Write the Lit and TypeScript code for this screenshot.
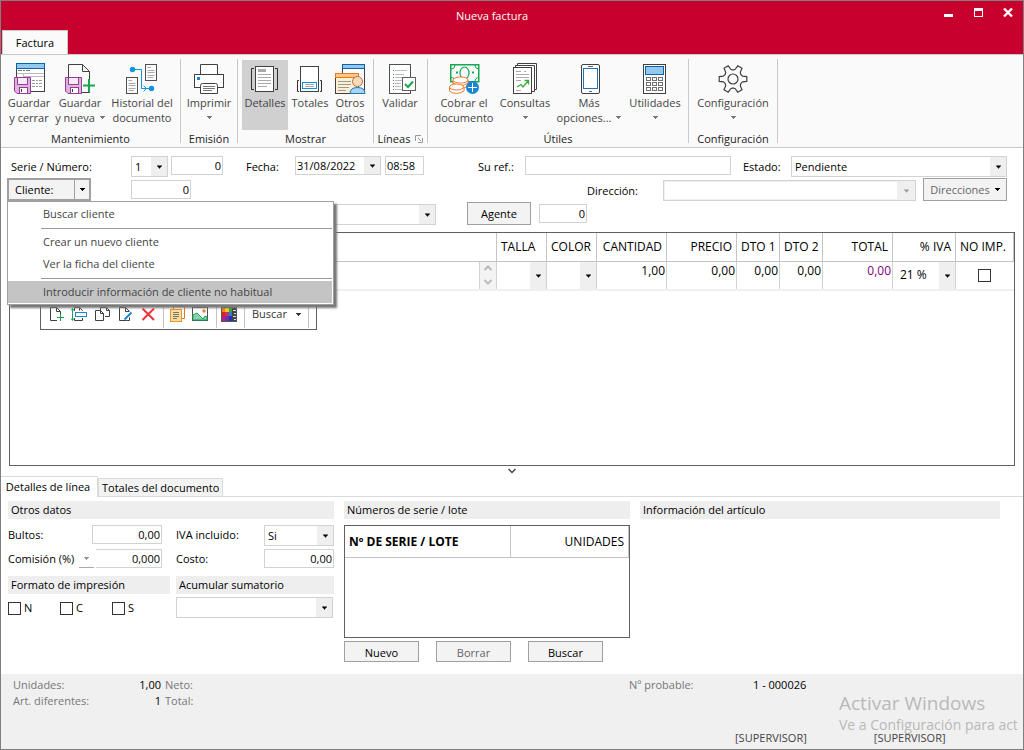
import { LitElement, html, css, svg, nothing } from "lit";
import { customElement, property } from "lit/decorators.js";
import { classMap } from "lit/directives/class-map.js";

const floppy = svg`
  <path d="M1.5 15.5H17.5V31.5H4L1.5 29Z" fill="#ddb3dd" stroke="#963b96"/>
  <rect x="5" y="16" width="9" height="6" fill="#f6eaf6"/>
  <path d="M4.500 16V22.500H14.500V16" fill="none" stroke="#963b96"/>
  <rect x="6.500" y="25.500" width="8" height="6" fill="#fafafa" stroke="#963b96"/>
  <rect x="8" y="27" width="1" height="3" fill="#404040"/>`;

const gearPath = (() => {
  const pts: string[] = [];
  for (let k = 0; k < 6; k++) {
    for (const [off, r] of [[-30, 9], [-17, 10], [-10, 14], [10, 14], [17, 10]]) {
      const a = ((k * 60 + off) * Math.PI) / 180;
      pts.push(`${(16 + r * Math.cos(a)).toFixed(1)} ${(17 + r * Math.sin(a)).toFixed(1)}`);
    }
  }
  return `M${pts.join("L")}Z`;
})();

const icons: Record<string, unknown> = {
  saveClose: svg`
    <rect x="3.5" y="1.5" width="28" height="28" fill="#fff" stroke="#404040"/>
    <rect x="3.5" y="1.500" width="28" height="5" fill="#91c8ec" stroke="#0a64ad"/>
    <path d="M5 8.500H9M10 8.500H12M13 8.500H17" stroke="#777"/>
    <path d="M4 11.500H31M10.500 11V15M10 14.500H31" stroke="#bbb"/>
    <path d="M19 18.500H22M23 18.500H25M26 18.500H29M19 21.500H22M23 21.500H25M26 21.500H29M19 24.500H22M23 24.500H25M26 24.500H29" stroke="#999"/>
    ${floppy}`,
  saveNew: svg`
    <path d="M4.500 15V2.500H18.500L25.500 9.500V17M25.500 29V30.500H18" fill="none" stroke="#404040"/>
    <path d="M18.500 2.500V9.500H25.500" fill="none" stroke="#404040"/>
    ${floppy}
    <path d="M25 17V30M19 23.500H31" stroke="#13a850" stroke-width="2"/>`,
  history: svg`
    <rect x="0.500" y="15.500" width="11" height="16" fill="#fafafa" stroke="#505050"/>
    <rect x="19.500" y="2.500" width="11" height="16" fill="#fafafa" stroke="#505050"/>
    <path d="M2.500 18.500H6M2.500 21.500H9.500M2.500 23.500H9.500M2.500 26.500H9.500M2.500 28.500H8M21.500 5.500H25M21.500 8.500H28.500M21.500 10.500H28.500M21.500 13.500H28.500M21.500 15.500H27" stroke="#aaa"/>
    <path d="M6 7.500H15.500V26.500H25M17.500 23.500L20.500 26.500L17.500 29.500" fill="none" stroke="#0d96e0"/>
    <circle cx="6.500" cy="7.500" r="2.700" fill="#0d96e0"/><circle cx="25.500" cy="26.500" r="2.700" fill="#0d96e0"/>`,
  print: svg`
    <path d="M7.500 12.500V2.500H24.500V12.500" fill="#fff" stroke="#404040"/>
    <rect x="1.500" y="12.500" width="29" height="13" fill="#fff" stroke="#404040"/>
    <rect x="4" y="15" width="3" height="3" fill="#1a86cf"/>
    <path d="M7.500 31.500V23.500Q7.500 21.500 9.500 21.500H22.500Q24.500 21.500 24.500 23.500V31.500Z" fill="#fff" stroke="#404040"/>
    <path d="M10 24.500H22M10 26.500H22M10 28.500H19" stroke="#777"/>`,
  details: svg`
    <rect x="6.500" y="4.500" width="18" height="25" fill="#fff" stroke="#404040"/>
    <rect x="9" y="7" width="8" height="3" fill="#aaa"/>
    <path d="M9 12.500H22M9 15.500H22M9 18.500H22M9 21.500H22M9 24.500H18" stroke="#aaa"/>
    <path d="M5 6.500H2.500V27.500H5M26 6.500H28.500V27.500H26" fill="none" stroke="#303030"/>`,
  totals: svg`
    <rect x="6.500" y="4.500" width="18" height="25" fill="#fff" stroke="#404040"/>
    <rect x="8.500" y="20.500" width="14" height="6" fill="#fff" stroke="#0d96e0"/>
    <path d="M11 22.500H20M11 24.500H20" stroke="#aaa"/>
    <path d="M5 18.500H3.500V29.500H5M26 18.500H27.500V29.500H26" fill="none" stroke="#303030"/>`,
  other: svg`
    <rect x="8.500" y="2.500" width="22" height="27" fill="#fff" stroke="#404040"/>
    <rect x="8.500" y="2.500" width="22" height="4" fill="#91c8ec" stroke="#0a64ad"/>
    <rect x="1.500" y="11.500" width="23" height="20" fill="#fdf0d2" stroke="#404040"/>
    <rect x="1.500" y="11.500" width="23" height="4" fill="#fbc98b" stroke="#e87722"/>
    <path d="M4 19.500H17M4 22.500H17M4 25.500H15M4 28.500H12" stroke="#999"/>
    <path d="M16 31.500Q16 25.500 23.500 25.500Q31 25.500 31 31.500Z" fill="#a9d3ef" stroke="#1a78bd"/>
    <circle cx="23.500" cy="19.500" r="5" fill="#fcd9b8" stroke="#b0703a"/>`,
  validate: svg`
    <rect x="5.500" y="2.500" width="21" height="29" fill="#fff" stroke="#505050"/>
    <path d="M11 8.500H23M11 12.500H20M11 15.500H22M11 18.500H18M11 21.500H17M11 24.500H17M11 27.500H18" stroke="#bbb"/>
    <path d="M9 8.500H10M9 15.500H10M9 21.500H10M9 27.500H10" stroke="#13a850"/><path d="M9 12.500H10M9 18.500H10M9 24.500H10" stroke="#d33"/>
    <rect x="18.500" y="15.500" width="13" height="13" fill="#fff" stroke="#606060"/>
    <path d="M21 22L24 25L29 19.500" fill="none" stroke="#13a850" stroke-width="2"/>`,
  cash: svg`
    <rect x="2.750" y="2.750" width="28" height="17" fill="#fafafa" stroke="#13a850" stroke-width="1.500"/>
    <path d="M3 7Q7 7 7 3M31 7Q27 7 27 3M3 15.500Q7 15.500 7 20M31 15.500Q27 15.500 27 20" fill="none" stroke="#13a850"/>
    <ellipse cx="16.500" cy="11" rx="4.500" ry="6" fill="none" stroke="#13a850" stroke-width="1.200"/>
    <path d="M8 10.500H10M24 10.500H26" stroke="#13a850" stroke-width="2"/>
    <g fill="#fff" stroke="#f07a30">
      <path d="M5 18V24Q12.500 29 20 24V18"/><ellipse cx="12.500" cy="18" rx="7.500" ry="3"/>
      <path d="M5 21Q12.500 26 20 21" fill="none"/>
      <path d="M1.500 25V29Q8 34 16 29V25"/><ellipse cx="8.500" cy="25" rx="7" ry="3"/>
    </g>
    <circle cx="24.500" cy="25.500" r="6.500" fill="#1a86cf"/><path d="M24.500 21V30M20 25.500H29" stroke="#fff"/>`,
  queries: svg`
    <path d="M8.500 5V1.500H27.500V27.500H25" fill="#fff" stroke="#404040"/>
    <path d="M6.500 6V3.500H25.500V29.500H23" fill="#fff" stroke="#404040"/>
    <rect x="4.500" y="5.500" width="18" height="26" fill="#fff" stroke="#404040"/>
    <path d="M7 9.500H12M15 9.500H17M7 12.500H20M7 15.500H20M7 18.500H12M7 28.500H12" stroke="#aaa"/>
    <path d="M8 25L12 22.500L14 25L19 19M15.500 18.500H19.500V22.500" fill="none" stroke="#3aa935" stroke-width="1.300"/>`,
  phone: svg`
    <rect x="8.500" y="2.500" width="18" height="29" rx="1.500" fill="#fff" stroke="#404040"/>
    <rect x="10.500" y="6.500" width="14" height="20" fill="#fff" stroke="#1a78bd"/>
    <path d="M15 4.500H20M16 29.500H19" stroke="#666"/>`,
  calc: svg`
    <rect x="4.500" y="2.500" width="22" height="29" fill="#fff" stroke="#404040"/>
    <rect x="6.500" y="4.500" width="18" height="8" fill="#91c8ec" stroke="#0a64ad"/>
    ${[15.5, 20.5, 25.5].map((y) => [7.5, 13.5, 19.5].map((x) => svg`<rect x=${x} y=${y} width="4" height="3" fill="#fff" stroke="#707070"/>`))}`,
  gear: svg`<path d=${gearPath} fill="none" stroke="#404040" stroke-width="1.200"/><circle cx="16" cy="17" r="5" fill="none" stroke="#404040" stroke-width="1.200"/>`,
};

const page = svg`<path d="M2.500 1.500H8.500L12.500 5.500V14.500H2.500ZM8.500 1.500V5.500H12.500" fill="#fff" stroke="#404040"/>`;
const small: Record<string, unknown> = {
  add: svg`${page}<rect x="9" y="8" width="8" height="8" fill="#fff"/><path d="M12.500 8V15M9 11.500H16" stroke="#13a850"/>`,
  insert: svg`<path d="M3.500 5V1.500H8.500L11.500 4.500V5M3.500 12V14.500H11.500V12M8.500 1.500V4.500" fill="none" stroke="#404040"/><rect x="4.500" y="6.500" width="11" height="4" fill="#fff" stroke="#1a86cf"/><path d="M1.500 3V14M0 4.500L1.500 2.500L3 4.500M0 12.500L1.500 14.500L3 12.500" fill="none" stroke="#13a850"/>`,
  copy: svg`<path d="M6.500 1.500H12.500L15.500 4.500V10.500H11M6.500 4V1.500M12.500 1.500V4.500H15.500" fill="none" stroke="#404040"/><path d="M1.500 4.500H6.500L9.500 7.500V14.500H1.500ZM6.500 4.500V7.500H9.500" fill="#fff" stroke="#404040"/>`,
  edit: svg`${page}<path d="M8 13L14.500 6.500" stroke="#fff" stroke-width="4"/><path d="M7.500 13.500L14.500 6.500" stroke="#1a86cf" stroke-width="2"/>`,
  remove: svg`<path d="M2.500 2.500L14 14M14 2.500L2.500 14" stroke="#ee3338" stroke-width="2"/>`,
  note: svg`<path d="M4.500 3V0.500H15.500V12.500H13" fill="#fff" stroke="#e87722"/><rect x="1.500" y="3.500" width="11" height="12" fill="#fbdc9a" stroke="#e8953a"/><path d="M4 6.500H10M4 8.500H10M4 10.500H10M4 12.500H8" stroke="#776"/>`,
  image: svg`<rect x="0.500" y="1.500" width="15" height="13" fill="#fff" stroke="#505050"/><circle cx="12" cy="5" r="1.700" fill="#f08030"/><path d="M1 9L5 7L11 13L13 10L15 11V14H1Z" fill="#8fd0b0" stroke="#13a850"/>`,
  palette: svg`<rect x="0.500" y="1.500" width="15" height="14" fill="#444" stroke="#555"/>
    <rect x="1" y="2" width="3" height="4" fill="#f08020"/><rect x="4" y="2" width="4" height="4" fill="#f0d020"/><rect x="8" y="2" width="3" height="4" fill="#40a040"/>
    <rect x="1" y="6" width="3" height="4" fill="#e02020"/><rect x="4" y="6" width="4" height="4" fill="#d03060"/><rect x="8" y="6" width="3" height="4" fill="#2080d0"/>
    <rect x="1" y="10" width="3" height="5" fill="#b02080"/><rect x="4" y="10" width="4" height="5" fill="#7030a0"/><rect x="8" y="10" width="3" height="5" fill="#2030c0"/>
    <path d="M12 4.500H15M13 7.500H15M12 10.500H15M13 13.500H15" stroke="#ddd"/>`,
};

const caret = html`<svg class="caret" width="5" height="3" viewBox="0 0 5 3" aria-hidden="true"><path d="M0 0H5V1H4V2H3V3H2V2H1V1H0Z" fill="currentColor" shape-rendering="crispEdges"/></svg>`;

@customElement("ribbon-button")
class RibbonButton extends LitElement {
  @property() icon = "";
  @property() label = "";
  @property() second = "";
  @property({ type: Boolean }) menu = false;
  @property({ type: Boolean }) active = false;

  static styles = css`
    :host { display: block; flex: none; }
    .btn {
      display: flex; flex-direction: column; align-items: center;
      width: 100%; height: 70px; padding: 2px 0 0; margin: 0; border: 0;
      background: transparent; color: #444;
      font: 11px/15px "Open Sans", "Noto Sans", sans-serif; white-space: nowrap;
    }
    .on { background: #d0d0d0; }
    .icon { display: block; flex: none; margin-bottom: 1px; }
    .line { display: flex; align-items: center; gap: 5px; height: 15px; }
    .caret { color: #777; }
  `;

  render() {
    return html`<button type="button" class=${classMap({ btn: true, on: this.active })}>
      <svg class="icon" width="32" height="32" viewBox="0 0 32 32" aria-hidden="true">${icons[this.icon]}</svg>
      <span class="line">${this.label}</span>
      <span class="line">${this.second}${this.menu ? caret : nothing}</span>
    </button>`;
  }
}

interface Btn { w: number; icon: string; label: string; second?: string; menu?: boolean; active?: boolean; }
interface Group { w: number; pad: number; title: string; launcher?: boolean; buttons: Btn[]; }

const groups: Group[] = [
  { w: 180, pad: 3, title: "Mantenimiento", buttons: [
    { w: 50, icon: "saveClose", label: "Guardar", second: "y cerrar" },
    { w: 52, icon: "saveNew", label: "Guardar", second: "y nueva", menu: true },
    { w: 72, icon: "history", label: "Historial del", second: "documento" } ] },
  { w: 57, pad: 3, title: "Emisión", buttons: [{ w: 50, icon: "print", label: "Imprimir", menu: true }] },
  { w: 136, pad: 4, title: "Mostrar", buttons: [
    { w: 46, icon: "details", label: "Detalles", active: true },
    { w: 44, icon: "totals", label: "Totales" },
    { w: 36, icon: "other", label: "Otros", second: "datos" } ] },
  { w: 54, pad: 2, title: "Líneas", launcher: true, buttons: [{ w: 48, icon: "validate", label: "Validar" }] },
  { w: 261, pad: 5, title: "Útiles", buttons: [
    { w: 62, icon: "cash", label: "Cobrar el", second: "documento" },
    { w: 60, icon: "queries", label: "Consultas", menu: true },
    { w: 68, icon: "phone", label: "Más", second: "opciones...", menu: true },
    { w: 64, icon: "calc", label: "Utilidades", menu: true } ] },
  { w: 89, pad: 4, title: "Configuración", buttons: [{ w: 80, icon: "gear", label: "Configuración", menu: true }] },
];

const columns = [
  { title: "TALLA", w: 50, align: "left" }, { title: "COLOR", w: 50, align: "left" },
  { title: "CANTIDAD", w: 70, align: "right" }, { title: "PRECIO", w: 70, align: "right" },
  { title: "DTO 1", w: 43, align: "right" }, { title: "DTO 2", w: 43, align: "right" },
  { title: "TOTAL", w: 70, align: "right" }, { title: "% IVA", w: 63, align: "right" },
  { title: "NO IMP.", w: 58, align: "left" },
];

@customElement("app-root")
class AppRoot extends LitElement {
  static styles = css`
    :host { display: block; font: 11px/16px "Open Sans", "Noto Sans", sans-serif; color: #000; }
    * { box-sizing: border-box; }
    button, input, select, textarea { font: inherit; color: inherit; margin: 0; border-radius: 0; }
    .window { position: relative; display: flex; flex-direction: column; min-height: 100vh; border: 1px solid #7f7f7f; background: #fff; overflow: hidden; }

    .titlebar { display: grid; grid-template-columns: 1fr auto 1fr; grid-template-rows: 29px 24px; background: #c8002d; color: #fff; }
    .title { grid-column: 2; margin: 0; padding-top: 7px; padding-right: 40px; font: inherit; }
    .winbtns { grid-column: 3; justify-self: end; display: flex; gap: 14px; padding: 4px 7px 0 0; }
    .winbtn { display: flex; width: 16px; height: 16px; padding: 0; border: 0; background: none; }
    .doctab { grid-row: 2; grid-column: 1; justify-self: start; width: 66px; margin-left: 1px; border: 1px solid #c9c9c9; border-bottom: 0; background: #fafafa; color: #000; padding: 0; text-align: center; }

    .ribbon { display: flex; height: 94px; border-top: 1px solid #c9c9c9; border-bottom: 1px solid #c9c9c9; background: #fafafa; }
    .group { display: flex; flex-direction: column; flex: none; margin: 4px 0; border-right: 1px solid #c9c9c9; }
    .buttons { display: flex; flex: none; height: 73px; padding-top: 1px; }
    .caption { display: flex; flex: none; align-items: center; justify-content: center; gap: 5px; height: 14px; color: #222; }

    .form { display: flex; flex-direction: column; gap: 2px; padding: 8px 16px 0 6px; }
    .row { display: flex; align-items: flex-start; height: 22px; }
    .row.first { height: 20px; }
    .lab { padding-top: 3px; white-space: nowrap; }
    .box { height: 19px; border: 1px solid #d2d2d2; background: #fff; padding: 0 2px; text-align: left; line-height: 17px; min-width: 0; outline: 0; }
    .num { text-align: right; padding-right: 1px; }
    .sel {
      appearance: none; height: 21px; padding: 0 18px 0 3px; border: 1px solid #d2d2d2; outline: 0; opacity: 1; min-width: 0;
      background: url("data:image/svg+xml,%3Csvg xmlns='http://www.w3.org/2000/svg' width='16' height='40'%3E%3Crect width='16' height='40' fill='%23efefef'/%3E%3Cpath d='M6 19H11V20H10V21H9V22H8V21H7V20H6Z'/%3E%3C/svg%3E") right center no-repeat #fff;
    }
    .sel.low { height: 19px; }
    .sel:disabled { border-color: #d2d2d2; box-shadow: inset 0 0 0 1px #f0f0f0;
      background-image: url("data:image/svg+xml,%3Csvg xmlns='http://www.w3.org/2000/svg' width='18' height='40'%3E%3Crect width='18' height='40' fill='%23efefef'/%3E%3Cpath fill='%23999' d='M7 19H12V20H11V21H10V22H9V21H8V20H7Z'/%3E%3C/svg%3E"); }
    .cmd { display: flex; align-items: center; justify-content: center; border: 1px solid #a0a0a0; background: #f3f3f3; padding: 0; height: 23px; }
    .cmd.dim { color: #666; }
    .cmd .caret { color: #000; margin-left: 5px; }
    .split { display: flex; width: 84px; height: 23px; border: 2px solid #a0a0a0; background: #f3f3f3; }
    .split .main { flex: 1; border: 0; border-right: 1px solid #a0a0a0; background: none; text-align: left; padding: 0 0 0 6px; }
    .split .drop { width: 14px; border: 0; background: none; padding: 0; display: flex; align-items: center; justify-content: center; }

    .menu { position: absolute; left: 6px; top: 200px; width: 327px; margin: 0; padding: 1px 1px 1px 0; list-style: none; border: 1px solid #a0a0a0; background: #fff; box-shadow: 3px 3px 2px #777; z-index: 3; }
    .item { display: block; width: 100%; height: 22px; border: 0; background: none; text-align: left; padding: 0 0 0 35px; color: #444; }
    .item.hot { background: #c4c4c4; }
    .rule { height: 1px; margin: 3px 0 2px 33px; background: #999; }

    .grid { flex: 1; min-height: 120px; margin: 8px 8px 0 8px; border: 1px solid #606060; }
    .lines { width: 100%; border-collapse: collapse; table-layout: fixed; border-bottom: 2px solid #f0f0f0; }
    .lines th { height: 28px; padding: 1px 4px 0; border-right: 1px solid #c4c4c4; border-bottom: 1px solid #c4c4c4; font-weight: 400; font-size: 12px; text-align: left; white-space: nowrap; }
    .lines th.right { text-align: right; }
    .lines td { height: 28px; padding: 0; vertical-align: top; border-right: 1px solid #d2d2d2; border-bottom: 1px solid #d2d2d2; }
    .lines td.last { text-align: center; vertical-align: middle; border: 0; }
    .lines td.last .check { display: block; margin: 0 auto; }
    .cell { display: block; width: 100%; height: 18px; border: 0; padding: 0 1px; background: none; outline: 0; text-align: right; font-size: 12px; }
    .cell.total { color: #800080; }
    .lines .sel { display: block; width: 100%; height: 27px; border: 0; font-size: 12px; padding-left: 7px; }
    .descr { display: flex; height: 27px; }
    .memo { flex: 1; border: 0; border-right: 1px solid #d2d2d2; resize: none; padding: 0; outline: 0; height: 27px; }
    .scroll { width: 16px; background: #f3f3f3; display: flex; align-items: center; justify-content: center; }
    .tools { display: inline-flex; align-items: center; width: 277px; height: 34px; margin: 5px 0 0 30px; padding: 4px 0 1px 7px; border: 1px solid #606060; background: #fff; gap: 7px; }
    .tool { display: flex; padding: 0; border: 0; background: none; width: 16px; height: 16px; }
    .pair { display: flex; gap: 7px; margin: 0 1px 0 -2px; }
    .single { display: flex; margin-left: -3px; }
    .bar { width: 1px; height: 100%; background: #c4c4c4; }
    .tools .find { display: flex; align-items: center; gap: 9px; width: auto; color: #333; }

    .splitter { display: flex; justify-content: center; padding-top: 2px; height: 10px; }
    .tabs { display: flex; align-items: flex-end; height: 21px; }
    .tab { height: 19px; border: 1px solid #dadada; background: #f3f3f3; padding: 0 3px; white-space: nowrap; }
    .tab.on { height: 21px; border-left: 0; border-bottom: 0; background: #fff; padding: 0 6px 1px 4px; width: 97px; }
    .fill { flex: 1; border-bottom: 1px solid #dadada; }

    .panel { display: grid; grid-template-columns: 326px 286px 1fr; column-gap: 10px; padding: 4px 23px 0 7px; height: 177px; }
    .head { margin: 0; height: 18px; padding: 1px 3px; background: #eee; font: inherit; white-space: nowrap; overflow: hidden; }
    .fields { display: grid; grid-template-columns: 71px 13px 70px 102px 70px; align-items: start; row-gap: 3px; padding-top: 6px; margin-bottom: 8px; }
    .fields .lab { padding-top: 2px; }
    .fields .wide { grid-column: 2 / 4; justify-self: end; width: 70px; }
    .fields .push { padding-left: 14px; }
    .commission { grid-column: 2 / 4; display: flex; gap: 2px; }
    .commission .box { flex: 1; border-left: 0; }
    .mini { display: flex; align-items: center; justify-content: center; width: 15px; height: 19px; padding: 0; background: none; border: 0; border-bottom: 1px solid #aaa; color: #999; }
    .halves { display: grid; grid-template-columns: 162px 158px; column-gap: 6px; }
    .checks { display: flex; padding-top: 5px; }
    .opt { display: flex; align-items: center; gap: 3px; width: 52px; height: 18px; }
    .check { appearance: none; width: 13px; height: 13px; border: 1px solid #333; background: #fff; }
    .sum { width: 157px; margin-top: 3px; }
    .serials { margin-top: 6px; height: 113px; border: 1px solid #606060; }
    .stable { width: 100%; border-collapse: collapse; table-layout: fixed; }
    .stable th { height: 31px; padding: 1px 4px 0; border-bottom: 1px solid #c4c4c4; border-right: 1px solid #c4c4c4; text-align: left; white-space: nowrap; font-size: 12px; }
    .stable th.thin { font-weight: 400; text-align: right; }
    .actions { display: flex; gap: 17px; padding-top: 3px; }
    .actions .cmd { width: 75px; height: 21px; padding-top: 2px; }

    .status { position: relative; height: 75px; background: #f0f0f0; padding: 3px 12px; color: #777; display: grid; grid-template-columns: 88px 60px 468px 84px 1fr; grid-template-rows: 16px 16px 36px; white-space: nowrap; }
    .val { color: #000; text-align: right; }
    .probable { color: #000; padding-left: 40px; }
    .tot { padding-left: 4px; }
    .users { grid-column: 1 / -1; align-self: end; display: flex; gap: 67px; padding-left: 722px; color: #444; height: 14px; line-height: 14px; }
    .mark { position: absolute; left: 838px; top: 17px; color: #b9b9b9; }
    .big { font-size: 19px; line-height: 24px; }
    .sub { font-size: 14px; line-height: 20px; }
    @media (max-width: 900px) { .users { padding-left: 40%; } }
  `;

  tool(name: string, label: string) {
    return html`<button type="button" class="tool" aria-label=${label}><svg width="16" height="16" viewBox="0 0 16 16" aria-hidden="true">${small[name]}</svg></button>`;
  }

  render() {
    return html`<div class="window">
      <header class="titlebar">
        <h1 class="title">Nueva factura</h1>
        <div class="winbtns">
          <button type="button" class="winbtn" aria-label="Minimizar"><svg width="16" height="16"><rect x="4" y="9" width="9" height="3" fill="#fff"/></svg></button>
          <button type="button" class="winbtn" aria-label="Maximizar"><svg width="16" height="16"><path d="M4 3H13V12H4ZM5 6V11H12V6Z" fill="#fff" fill-rule="evenodd"/></svg></button>
          <button type="button" class="winbtn" aria-label="Cerrar"><svg width="16" height="16"><path d="M4 3.500L12 11.500M12 3.500L4 11.500" stroke="#fff" stroke-width="2.400"/></svg></button>
        </div>
        <button type="button" class="doctab">Factura</button>
      </header>

      <nav class="ribbon">
        ${groups.map((g) => html`<section class="group" style="width:${g.w}px">
          <div class="buttons" style="padding-left:${g.pad}px">${g.buttons.map((b) => html`<ribbon-button style="width:${b.w}px" .icon=${b.icon} .label=${b.label} .second=${b.second ?? ""} .menu=${!!b.menu} .active=${!!b.active}></ribbon-button>`)}</div>
          <div class="caption">${g.title}${g.launcher ? html`<svg width="8" height="8" viewBox="0 0 8 8" aria-hidden="true"><path d="M0.500 6V0.500H6M3 3L6 6M7.500 3V7.500H3" fill="none" stroke="#999"/></svg>` : nothing}</div>
        </section>`)}
      </nav>

      <main class="form">
        <div class="row first">
          <label class="lab" for="serie" style="width:124px;padding-left:4px">Serie / Número:</label>
          <select class="sel" id="serie" style="width:37px"><option>1</option></select>
          <input class="box num" aria-label="Número" value="0" style="width:52px;margin-left:3px" />
          <label class="lab" for="fecha" style="width:72px;padding-left:23px">Fecha:</label>
          <select class="sel low" id="fecha" style="width:86px;padding-left:1px"><option>31/08/2022</option></select>
          <input class="box" aria-label="Hora" value="08:58" style="width:39px;margin-left:4px;padding:0 1px" />
          <label class="lab" for="ref" style="width:101px;padding-left:54px">Su ref.:</label>
          <input class="box" id="ref" style="flex:1 1 206px" />
          <label class="lab" for="estado" style="width:60px;padding-left:12px">Estado:</label>
          <select class="sel" id="estado" style="flex:1 1 216px"><option>Pendiente</option></select>
        </div>
        <div class="row">
          <div class="split" style="margin-right:40px"><button type="button" class="main">Cliente:</button><button type="button" class="drop" aria-label="Opciones de cliente" aria-expanded="true">${caret}</button></div>
          <input class="box num" aria-label="Cliente" value="0" style="width:60px;margin-top:2px" />
          <label class="lab" for="dir" style="width:76px;padding-top:5px;margin-left:auto">Dirección:</label>
          <select class="sel" id="dir" disabled style="width:253px;margin-top:2px"><option></option></select>
          <button type="button" class="cmd dim" style="width:84px;margin-left:7px">Direcciones${caret}</button>
        </div>
        <div class="row">
          <select class="sel" aria-label="Forma de pago" style="width:305px;margin:2px 31px 0 124px"><option></option></select>
          <button type="button" class="cmd" style="width:64px">Agente</button>
          <input class="box num" aria-label="Agente" value="0" style="width:48px;margin:2px 0 0 8px" />
        </div>
      </main>

      <ul class="menu" role="menu">
        <li><button type="button" role="menuitem" class="item">Buscar cliente</button></li>
        <li class="rule" role="separator"></li>
        <li><button type="button" role="menuitem" class="item">Crear un nuevo cliente</button></li>
        <li><button type="button" role="menuitem" class="item">Ver la ficha del cliente</button></li>
        <li class="rule" role="separator"></li>
        <li><button type="button" role="menuitem" class="item hot">Introducir información de cliente no habitual</button></li>
      </ul>

      <section class="grid">
        <table class="lines">
          <colgroup><col />${columns.map((c) => html`<col style="width:${c.w}px" />`)}</colgroup>
          <thead><tr><th></th>${columns.map((c) => html`<th class=${c.align}>${c.title}</th>`)}</tr></thead>
          <tbody><tr>
            <td><div class="descr"><textarea class="memo" aria-label="Descripción"></textarea><span class="scroll"><svg width="10" height="22" viewBox="0 0 10 22" aria-hidden="true"><path d="M1.500 6L5 2.500L8.500 6M1.500 16L5 19.500L8.500 16" fill="none" stroke="#bbb" stroke-width="2"/></svg></span></div></td>
            <td><select class="sel" aria-label="Talla"><option></option></select></td>
            <td><select class="sel" aria-label="Color"><option></option></select></td>
            <td><input class="cell" aria-label="Cantidad" value="1,00" /></td>
            <td><input class="cell" aria-label="Precio" value="0,00" /></td>
            <td><input class="cell" aria-label="Dto 1" value="0,00" /></td>
            <td><input class="cell" aria-label="Dto 2" value="0,00" /></td>
            <td><input class="cell total" aria-label="Total" value="0,00" /></td>
            <td><select class="sel" aria-label="IVA"><option>21 %</option></select></td>
            <td class="last"><input type="checkbox" class="check" aria-label="No imprimir" /></td>
          </tr></tbody>
        </table>
        <div class="tools">
          ${this.tool("add", "Añadir")}${this.tool("insert", "Insertar")}${this.tool("copy", "Copiar")}${this.tool("edit", "Editar")}${this.tool("remove", "Eliminar")}
          <span class="bar"></span>
          <div class="pair">${this.tool("note", "Nota")}${this.tool("image", "Imagen")}</div>
          <span class="bar"></span>
          <div class="single">${this.tool("palette", "Colores")}</div>
          <span class="bar"></span>
          <button type="button" class="tool find">Buscar ${caret}</button>
          <span class="bar"></span>
        </div>
      </section>

      <div class="splitter"><svg width="8" height="6" viewBox="0 0 8 6" aria-hidden="true"><path d="M0.500 1L4 4.500L7.500 1" fill="none" stroke="#444" stroke-width="1.500"/></svg></div>
      <div class="tabs">
        <button type="button" class="tab on">Detalles de línea</button>
        <button type="button" class="tab">Totales del documento</button>
        <span class="fill"></span>
      </div>

      <section class="panel">
        <div>
          <h2 class="head">Otros datos</h2>
          <div class="fields">
            <label class="lab" for="bultos">Bultos:</label>
            <input class="box num wide" id="bultos" value="0,00" />
            <label class="lab push" for="ivainc">IVA incluido:</label>
            <select class="sel" id="ivainc"><option>Si</option></select>
            <label class="lab" for="comision">Comisión (%)</label>
            <div class="commission"><button type="button" class="mini" aria-label="Tipo de comisión">${caret}</button><input class="box num" id="comision" value="0,000" /></div>
            <label class="lab push" for="costo">Costo:</label>
            <input class="box num" id="costo" value="0,00" />
          </div>
          <div class="halves">
            <h2 class="head">Formato de impresión</h2>
            <h2 class="head">Acumular sumatorio</h2>
            <div class="checks">${["N", "C", "S"].map((n) => html`<label class="opt"><input type="checkbox" class="check" />${n}</label>`)}</div>
            <select class="sel sum" aria-label="Acumular sumatorio"><option></option></select>
          </div>
        </div>
        <div>
          <h2 class="head">Números de serie / lote</h2>
          <div class="serials"><table class="stable">
            <colgroup><col /><col style="width:118px" /></colgroup>
            <thead><tr><th>Nº DE SERIE / LOTE</th><th class="thin">UNIDADES</th></tr></thead>
          </table></div>
          <div class="actions">
            <button type="button" class="cmd">Nuevo</button>
            <button type="button" class="cmd dim">Borrar</button>
            <button type="button" class="cmd">Buscar</button>
          </div>
        </div>
        <div><h2 class="head">Información del artículo</h2></div>
      </section>

      <footer class="status">
        <span>Unidades:</span><span class="val">1,00</span><span class="tot">Neto:</span><span>Nº probable:</span><span class="probable">1 - 000026</span>
        <span>Art. diferentes:</span><span class="val">1</span><span class="tot">Total:</span><span></span><span></span>
        <div class="users"><span>[SUPERVISOR]</span><span>[SUPERVISOR]</span></div>
        <div class="mark"><div class="big">Activar Windows</div><div class="sub">Ve a Configuración para act</div></div>
      </footer>
    </div>`;
  }
}
